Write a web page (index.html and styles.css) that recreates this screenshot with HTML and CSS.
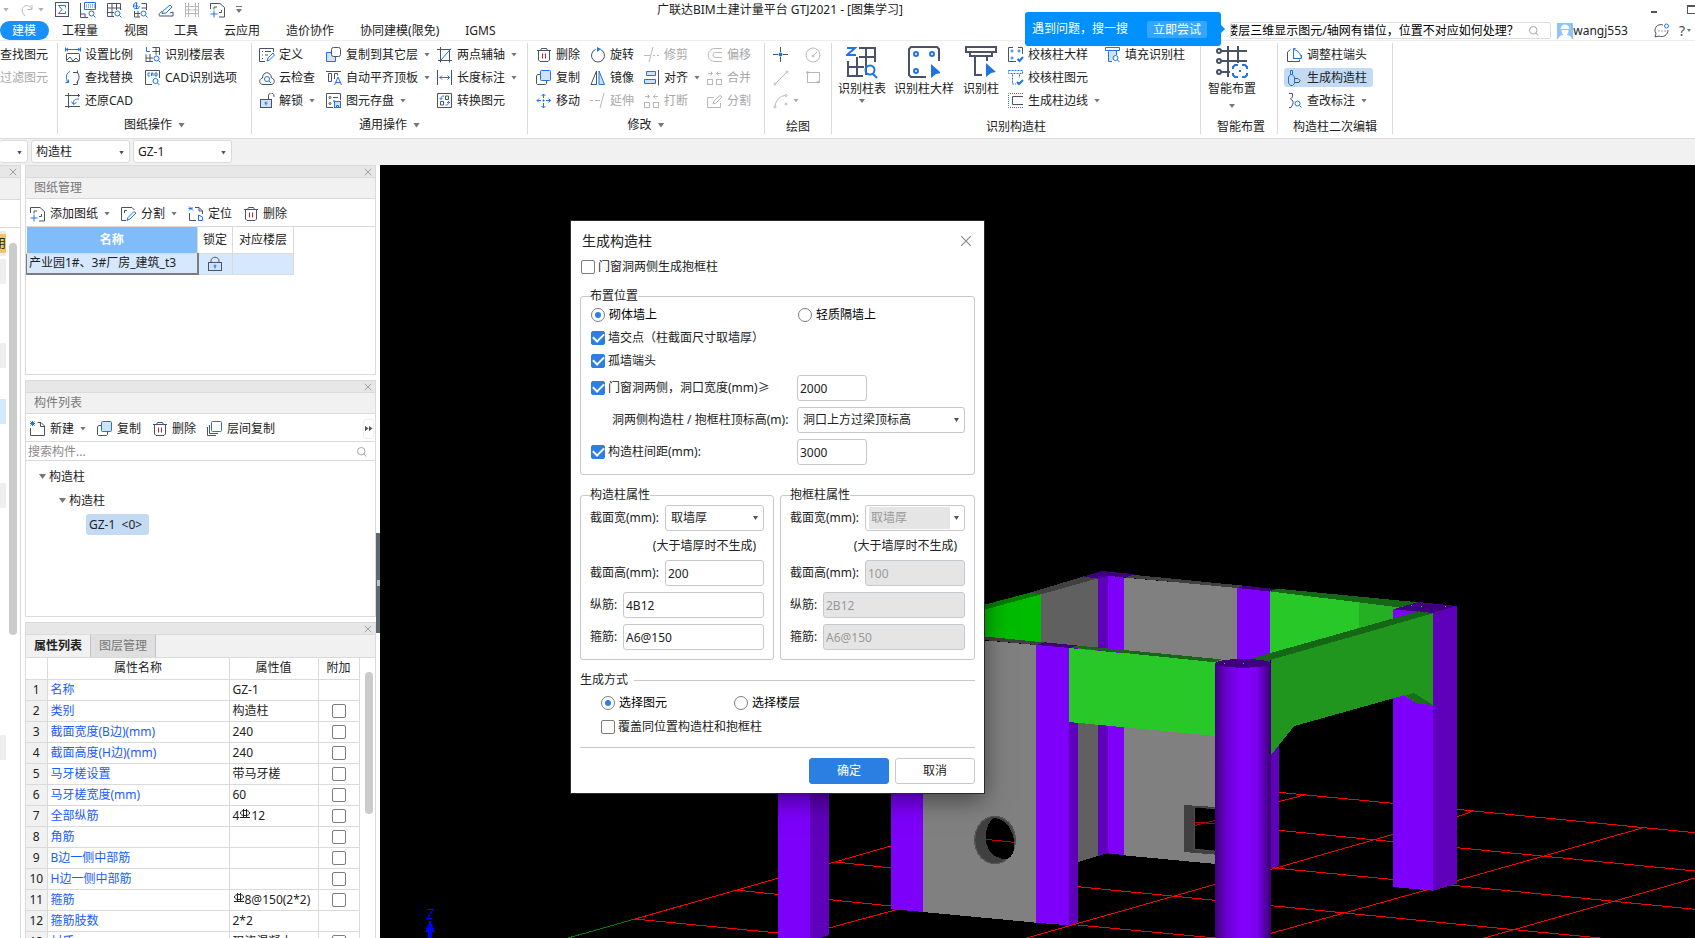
FILE: index.html
```html
<!DOCTYPE html>
<html lang="zh-CN">
<head>
    <meta charset="UTF-8">
    <meta name="viewport" content="width=device-width, initial-scale=1.0">
    <title>广联达BIM土建计量平台 GTJ2021</title>
    <link rel="stylesheet" href="styles.css">
</head>
<body>
    <!-- iconos -->
    <svg class="defs" aria-hidden="true">
        <symbol id="redo" viewBox="0 0 16 16"><path class="s" d="M13 3v4.5H8.500M13 7C11 3 6 2.5 4 5.500S4 12 6 14"/></symbol>
        <symbol id="sum" viewBox="0 0 16 16"><rect class="s" x="1.5" y=".5" width="13" height="14"/><path class="b" d="M11.500 5.500V3.500h-7L8 7.500l-3.500 4h7V9.500"/></symbol>
        <symbol id="keys" viewBox="0 0 16 16"><path class="s" d="M.5 1v14.500H8M.5 12H5v3"/><path class="b" d="M4.500 .5h11v7h-11z"/><path class="b" d="M6 3h9M6 5h9" stroke-dasharray="1 1"/><circle class="b" cx="11.500" cy="11.500" r="2.500"/><path class="b" d="M13.500 13.500l2 2"/></symbol>
        <symbol id="gridfind" viewBox="0 0 16 16"><path class="s" d="M8 14.500H1.500v-13h13V8M1.500 6h13M1.500 10.500H8M6 1.500v13M10.500 1.500V8"/><circle class="b" cx="11.500" cy="11.500" r="2.500"/><path class="b" d="M13.500 13.500l2 2"/></symbol>
        <symbol id="globefind" viewBox="0 0 16 16"><path class="b" d="M7.500 4a3 3 0 1 1-2-3M4.500 1v6M1 4h5"/><path class="s" d="M9.500 1.500h5V8M9.500 6h5M2.500 9v6H8M2.500 11.500H8M6 9v6"/><circle class="b" cx="11.500" cy="11.500" r="2.500"/><path class="b" d="M13.500 13.500l2 2"/></symbol>
        <symbol id="pen" viewBox="0 0 16 16"><path class="b" d="M5 9l7-6 2 2-6 6-4 .5z"/><path class="s" d="M4 9.500C1 11 0 14 2 14h13V10l-3 1"/></symbol>
        <symbol id="frame" viewBox="0 0 16 16"><path class="s" d="M1.500 1v14M14.500 1v14M4.500 1v14M11.500 1v14M1 4.500h14M1 11.500h14M1 8h14"/></symbol>
        <symbol id="addsheet" viewBox="0 0 16 16"><path class="s" d="M.5 7V1.500H10l4.500 4V15H9M4 7.500V5h3M9 10.500h2.500V8"/><path class="b" d="M.5 12h7M4 8.500v7"/></symbol>
        <symbol id="scale" viewBox="0 0 16 16"><path class="b" d="M1 2.500h14M.5 .5v4M15.500 .5v4M3 1L1 2.500 3 4M13 1l2 1.500L13 4"/><rect class="s" x="1.500" y="6.500" width="13" height="8" rx="1"/><path class="s" d="M2 13l3-3 3 4 3-3 3 3"/></symbol>
        <symbol id="swap" viewBox="0 0 16 16"><path class="b" d="M5 1.500C1 3 .5 8 3 13M.5 12.500h3v-3"/><path class="s" d="M8 2.500h4.500M12.500 .5v3M12 2c3 3 2.500 8-.5 11M8 14.500h4.500V10.500"/></symbol>
        <symbol id="crop" viewBox="0 0 16 16"><path class="s" d="M3.500 0v15M0 2.500h15M0 13.500h15M13.500 1v3"/><path class="b" d="M14 6c-4 0-6 1-5.500 5M6.500 8.500l2 3 3-2"/></symbol>
        <symbol id="floors" viewBox="0 0 16 16"><path class="b" d="M1.500 0v4.500H5"/><path class="s" d="M7.500 .5h7V8M7.500 4.500h7M11 .5V8M1 7.500v7h7M1 11h7M5 7v8"/><circle class="b" cx="11.500" cy="11.500" r="2.500"/><path class="b" d="M13.500 13.500l2 2"/></symbol>
        <symbol id="cad" viewBox="0 0 16 16"><path class="s" d="M14.500 8V.5h-14v14H7"/><path class="b" d="M5 3H3v3h2M6.500 6V3h1.500v3M10 3v3h2V3z"/><circle class="b" cx="10.500" cy="11" r="2.500"/><path class="b" d="M12.500 13l2 2"/></symbol>
        <symbol id="define" viewBox="0 0 16 16"><path class="s" d="M14.500 5V1.500h-14v13H6M3 4.500h1M6 4.500h6M3 8h1M6 8h3M3 11.500h1"/><path class="b" d="M8 14l1-3 5-5 1.500 2-5 5z"/></symbol>
        <symbol id="cloud" viewBox="0 0 16 16"><path class="s" d="M4 14.500C0 14.500-.5 9 3.500 8 3.500 1 12 1 12.500 8c4 1 3.500 6.500-.5 6.500z"/><circle class="b" cx="8" cy="9" r="2.500"/><path class="b" d="M10 11l2 2"/></symbol>
        <symbol id="unlock" viewBox="0 0 16 16"><rect class="s f" x="1.500" y="6.500" width="11" height="8"/><path class="s" d="M9.500 6V3c0-4 5.500-4 5.500 0v1"/><path class="b" d="M7 8.500v4M5.500 10h3"/></symbol>
        <symbol id="lock" viewBox="0 0 16 16"><rect class="s f" x="1.500" y="6.500" width="13" height="8"/><path class="s" d="M4 6.500V5c0-5 8-5 8 0v1.500"/><path class="b" d="M8 8.500v4M6.500 10h3"/></symbol>
        <symbol id="layers" viewBox="0 0 16 16"><path class="b f" d="M6 5.500H.5v9h9V10"/><rect class="s fw" x="5.500" y=".5" width="9" height="9" rx="2"/></symbol>
        <symbol id="flush" viewBox="0 0 16 16"><path class="s" d="M0 1.500h15M2.500 3.500h3v8h-3zM8.500 9V3.500h3v2"/><path class="b" d="M8.500 15l3.500-8 3.500 8M10 12.500h4"/></symbol>
        <symbol id="store" viewBox="0 0 16 16"><path class="s" d="M7 14.500H.5V.5h14V7M7 4.500h5M7 8h2"/><circle class="s" cx="4" cy="4.500" r="1"/><circle class="s" cx="4" cy="10.500" r="1"/><rect class="b f" x="8.500" y="8.500" width="6" height="6"/><path class="b" d="M10.500 15v-2.500h2V15"/></symbol>
        <symbol id="axis" viewBox="0 0 16 16"><path class="s" d="M3.500 0v15.500M12.500 2.500v13M0 2.500h14M1 13.500h14"/><path class="b" d="M3.500 13.500L14 1.500"/></symbol>
        <symbol id="dim" viewBox="0 0 16 16"><path class="s" d="M.5 0v15M14.500 0v15"/><path class="b" d="M2.500 7.500h10M5 5.500l-2 2 2 2M10.500 5.500l2 2-2 2"/></symbol>
        <symbol id="convert" viewBox="0 0 16 16"><path class="s" d="M.5 .5h14v14H.5zM8.500 3h3v3.500h-3zM3.500 8.500h3V12h-3z"/><path class="b" d="M7 3C4 3 4 4 4 6.500M2.500 5L4 6.500 5.500 5M8.500 12c3 0 3-1 3-3.500M10 10l1.500-1.500L13 10"/></symbol>
        <symbol id="trash" viewBox="0 0 16 16"><path class="s" d="M1 3.500h14M4.500 3.500l1-2h5l1 2M2.500 3.500v9.500l1.500 1.500h8l1.500-1.500V3.500"/><path class="r" d="M6.500 6.500v5M9.500 6.500v5"/></symbol>
        <symbol id="copy" viewBox="0 0 16 16"><path class="s" d="M5 4.500H1.500L.5 6v7.500l1 1h8l1-1V11"/><rect class="b f" x="4.500" y=".5" width="10" height="10" rx="1"/></symbol>
        <symbol id="move" viewBox="0 0 16 16"><path class="b" d="M7.500 1v4M7.500 10v5M1 7.500h4M10 7.500h5M5.500 3l2-2 2 2M5.500 13l2 2 2-2M3 5.500l-2 2 2 2M12.500 5.500l2 2-2 2"/><path class="s" d="M7.500 6.500v2M6.500 7.500h2"/></symbol>
        <symbol id="rotate" viewBox="0 0 16 16"><path class="s" d="M5.500 2.500a6.500 6.500 0 1 0 5 0"/><path class="fb" d="M7 0l4 2-4 3z"/></symbol>
        <symbol id="mirror" viewBox="0 0 16 16"><path class="s" d="M6.500 1v13.500H1z"/><path class="b f" d="M9 1v13.500h5.500z"/></symbol>
        <symbol id="trim" viewBox="0 0 16 16"><path class="s" d="M0 8.500h6M9 0L5 15M9 8.500h2M13 8.500h2"/></symbol>
        <symbol id="extend" viewBox="0 0 16 16"><path class="s" d="M0 7.500h3M5 7.500h5M14 0l-4 15"/></symbol>
        <symbol id="align" viewBox="0 0 16 16"><path class="s" d="M14.500 0v15.500"/><path class="b f" d="M2.500 1.500h9v4h-9zM.5 9.500h11v4H.5z"/></symbol>
        <symbol id="offset" viewBox="0 0 16 16"><path class="s" d="M15 1.500H8c-9 0-9 13 0 13h7M15 5.500H9c-4 0-4 5 0 5h6"/></symbol>
        <symbol id="merge" viewBox="0 0 16 16"><rect class="s" x=".5" y="9.500" width="5" height="5"/><rect class="s" x="9.500" y="9.500" width="5" height="5"/><path class="s" d="M1 3.500h4M3.500 1.500l2 2-2 2M14 3.500h-4M11.500 1.500l-2 2 2 2"/></symbol>
        <symbol id="split" viewBox="0 0 16 16"><path class="s" d="M7 4.500H.5v10h13V10M6 11l3-1 6-6-2-1.500L7 8z"/></symbol>
        <symbol id="point" viewBox="0 0 16 16"><path class="s" d="M7.500 0v5M7.500 10v5M0 7.500h5M10 7.500h5"/><circle class="fb" cx="7.500" cy="7.500" r="2"/></symbol>
        <symbol id="line" viewBox="0 0 16 16"><path class="s" d="M3 13L13 3"/><circle class="s" cx="2" cy="14" r="1"/><circle class="s" cx="14" cy="2" r="1"/></symbol>
        <symbol id="arc" viewBox="0 0 16 16"><path class="s" d="M2 13C3 7 7 3 12 2.500"/><circle class="s" cx="2" cy="14" r="1"/><circle class="s" cx="13" cy="2.500" r="1"/><circle class="s" cx="13" cy="11" r="1"/></symbol>
        <symbol id="circle" viewBox="0 0 16 16"><circle class="s" cx="8" cy="8" r="7"/><circle class="s" cx="8" cy="9" r="1"/><path class="s" d="M9 8l3-3"/></symbol>
        <symbol id="rect" viewBox="0 0 16 16"><rect class="s" x="2.500" y="2.500" width="12" height="10"/><circle class="s" cx="2.500" cy="2.500" r="1"/><circle class="s" cx="13" cy="12" r="1"/></symbol>
        <symbol id="colcheck" viewBox="0 0 16 16"><path class="s" d="M5 .5H.5v14H8M10 .5h4.500V7"/><circle class="b" cx="4" cy="4" r="1"/><circle class="b" cx="11" cy="4" r="1"/><circle class="b" cx="4" cy="11" r="1"/><path class="b w2" d="M9.500 12l2 2 3.500-4"/></symbol>
        <symbol id="elcheck" viewBox="0 0 16 16"><path class="b" d="M.5 .5h14v3H.500zM4.500 4.500V14H8M11.500 4.500V8" stroke-dasharray="2 1"/><path class="b w2" d="M9 12l2 2 4-4"/></symbol>
        <symbol id="edge" viewBox="0 0 16 16"><path class="b" d="M15 .5H.5v14H15" stroke-dasharray="1 1"/><path class="s" d="M15 3.500H4.500v8H15"/></symbol>
        <symbol id="fillcol" viewBox="0 0 16 16"><path class="fl" d="M3 4h8v4l-4 6H3z"/><path class="b" d="M.5 .5h14v3H.5zM3.500 4.500v10H7M11.500 4v4"/><circle class="b" cx="10.500" cy="11" r="2.500"/><path class="b" d="M12.500 13l2 2"/></symbol>
        <symbol id="colend" viewBox="0 0 16 16"><path class="s" d="M3.500 2.500L.5 5v9.500h12v-2M6.500 4v8"/><path class="b" d="M6.500 1.500v10h8c-1-5-3-8-8-9M6.500 1.500h2M14.500 11V8"/></symbol>
        <symbol id="gencol" viewBox="0 0 16 16"><path class="b" d="M3.500 .5h2v4h-2zM3.500 4.500L1.500 7v6l2 2.500h2l2-2V7l-2-2.500"/><path class="s" d="M8 8.500h3l2 2-1 2H8"/></symbol>
        <symbol id="editdim" viewBox="0 0 16 16"><path class="s" d="M2 .5h3.500V4L3.500 6 6 8v3l-2 3.500H2"/><circle class="b" cx="10.500" cy="10.500" r="2.500"/><path class="b" d="M12.500 12.500l2 2"/></symbol>
        <symbol id="cutsheet" viewBox="0 0 16 16"><path class="s" d="M5 14.500H.5v-13H11L13.500 4M3.500 7V4.500H6"/><path class="b" d="M6 14.500l1-3 6-6L15 7l-6 6z"/></symbol>
        <symbol id="locate" viewBox="0 0 16 16"><path class="b" d="M1 .5l4 4M4.500 1L1 4.500M.5 2.500h4"/><path class="s" d="M1.500 7v7.500H8M7 1.500h4l3.500 3.500v3M11 1.500V5h3"/><path class="b" d="M10.500 9v5.500h4V11l-4-2"/></symbol>
        <symbol id="newdoc" viewBox="0 0 16 16"><path class="s" d="M.5 7v7.500h14V5L11 1.500H7.500M10.500 1.500v4h4"/><path class="b" d="M.5 .5l4 4M4.500 .5l-4 4M2.500 0v5M0 2.500h5"/></symbol>
        <symbol id="floorcopy" viewBox="0 0 16 16"><path class="s" d="M.5 6v8.500H9M2.500 4v8.500H11"/><rect class="b fw" x="4.500" y=".5" width="10" height="10" rx="1"/></symbol>
        <symbol id="find" viewBox="0 0 16 16"><circle class="g" cx="7" cy="7" r="5"/><path class="g" d="M10.500 10.500l3 3.500"/></symbol>
        <symbol id="chat" viewBox="0 0 16 16"><path class="s" d="M9 2C3 0-1 6 2 10.500L1 14l4-1c4 2 9-1 9-6M4.500 8h1M7.500 8h1M10.500 8h1"/><circle class="b" cx="12.500" cy="3" r="2"/></symbol>
        <symbol id="close" viewBox="0 0 10 10"><path class="g" d="M1 1l8 8M9 1L1 9"/></symbol>
        <symbol id="rebar" viewBox="0 0 10 10"><path class="k" d="M3.500 0v8M6.500 0v8M0 8.500h10"/><ellipse class="k" cx="5" cy="4" rx="4.500" ry="2.500"/></symbol>
        <symbol id="bigtable" viewBox="0 0 32 32"><path class="b w3" d="M1 2h8L1 9h9"/><path class="s w3" d="M13 2h16v14M13 11h16M20 2v27M2 15v15h15M2 21h16M11 11v19"/><circle class="b w3" cx="24" cy="24" r="4.500"/><path class="b w3" d="M27 28l4 4"/></symbol>
        <symbol id="bigdetail" viewBox="0 0 32 32"><path class="s w3" d="M31 15V3l-2-2H3L1 3v26l2 2h15"/><circle class="b w3" cx="8" cy="8" r="2"/><circle class="b w3" cx="24" cy="8" r="2"/><circle class="b w3" cx="8" cy="25" r="2"/><path class="fb" d="M23 18l10 9-5 1-5 4z"/></symbol>
        <symbol id="bigcol" viewBox="0 0 32 32"><path class="s w3" d="M1 1h30v5h-4v4H5V6H1zM5 6h22M10 11v18h7M22 10v5"/><path class="fb" d="M21 17l10 9-5 1-5 4z"/></symbol>
        <symbol id="biglayout" viewBox="0 0 32 32"><path class="s w3" d="M5 5h26M5 15h26M5 26h9M12 0v31M22 0v17"/><circle class="s w3 fw" cx="3" cy="5" r="2"/><circle class="s w3 fw" cx="3" cy="15" r="2"/><circle class="s w3 fw" cx="3" cy="26" r="2"/><path class="cut" d="M16 18h16v14H16z"/><path class="b w3" d="M22 19h-3l-2 2v2M26 19h3l2 2v2M17 27v2l2 2h3M31 27v2l-2 2h-3M24 24v2"/></symbol>
    </svg>

    <header class="titlebar">
        <div class="quick">
            <i class="caret dim"></i>
            <svg class="icon off"><use href="#redo"/></svg><i class="caret dim"></i>
            <svg class="icon"><use href="#sum"/></svg>
            <svg class="icon"><use href="#keys"/></svg>
            <svg class="icon"><use href="#gridfind"/></svg>
            <svg class="icon"><use href="#globefind"/></svg>
            <svg class="icon"><use href="#pen"/></svg>
            <svg class="icon off"><use href="#frame"/></svg>
            <svg class="icon"><use href="#addsheet"/></svg>
            <i class="caret more"></i>
        </div>
        <h1>广联达BIM土建计量平台 GTJ2021 - [图集学习]</h1>
        <div class="winbtns">
            <button class="min" aria-label="最小化"></button>
            <button class="restore" aria-label="还原"></button>
        </div>
    </header>

    <nav class="menu">
        <a class="on" href="#">建模</a>
        <a href="#">工程量</a>
        <a href="#">视图</a>
        <a href="#">工具</a>
        <a href="#">云应用</a>
        <a href="#">造价协作</a>
        <a href="#">协同建模(限免)</a>
        <a href="#">IGMS</a>
        <div class="account">
            <label class="ask">
                <input type="text" aria-label="搜索问题" value="楼层三维显示图元/轴网有错位，位置不对应如何处理？">
                <svg class="icon"><use href="#find"/></svg>
            </label>
            <svg class="avatar" viewBox="0 0 16 16"><rect width="16" height="16" fill="#8fc3fb"/><path fill="#fff" d="M3.500 6C4 0 12 0 12.500 6l-1 1c0 3-1 4-2 5 3 0 5 2 5.500 4H1c.5-2 2.500-4 5.500-4-1-1-2-2-2-5z"/><path stroke="#8fc3fb" d="M3 6.500h10"/></svg>
            <span>wangj553</span>
            <svg class="icon chat"><use href="#chat"/></svg>
            <button class="help">?<i class="caret"></i></button>
        </div>
        <div class="tip">遇到问题，搜一搜 <button>立即尝试</button></div>
    </nav>

    <section class="ribbon">
        <div class="group g1">
            <div class="cols"><div class="col">
                <button>查找图元</button>
                <button class="off" disabled>过滤图元</button>
            </div></div>
        </div>
        <div class="group g2">
            <div class="cols">
                <div class="col">
                    <button><svg class="icon"><use href="#scale"/></svg>设置比例</button>
                    <button><svg class="icon"><use href="#swap"/></svg>查找替换</button>
                    <button><svg class="icon"><use href="#crop"/></svg>还原CAD</button>
                </div>
                <div class="col">
                    <button><svg class="icon"><use href="#floors"/></svg>识别楼层表</button>
                    <button><svg class="icon"><use href="#cad"/></svg>CAD识别选项</button>
                </div>
            </div>
            <div class="name">图纸操作<i class="caret big"></i></div>
        </div>
        <div class="group g3">
            <div class="cols">
                <div class="col">
                    <button><svg class="icon"><use href="#define"/></svg>定义</button>
                    <button><svg class="icon"><use href="#cloud"/></svg>云检查</button>
                    <button><svg class="icon"><use href="#unlock"/></svg>解锁<i class="caret"></i></button>
                </div>
                <div class="col">
                    <button><svg class="icon"><use href="#layers"/></svg>复制到其它层<i class="caret"></i></button>
                    <button><svg class="icon"><use href="#flush"/></svg>自动平齐顶板<i class="caret"></i></button>
                    <button><svg class="icon"><use href="#store"/></svg>图元存盘<i class="caret"></i></button>
                </div>
                <div class="col">
                    <button><svg class="icon"><use href="#axis"/></svg>两点辅轴<i class="caret"></i></button>
                    <button><svg class="icon"><use href="#dim"/></svg>长度标注<i class="caret"></i></button>
                    <button><svg class="icon"><use href="#convert"/></svg>转换图元</button>
                </div>
            </div>
            <div class="name">通用操作<i class="caret big"></i></div>
        </div>
        <div class="group g4">
            <div class="cols">
                <div class="col">
                    <button><svg class="icon"><use href="#trash"/></svg>删除</button>
                    <button><svg class="icon"><use href="#copy"/></svg>复制</button>
                    <button><svg class="icon"><use href="#move"/></svg>移动</button>
                </div>
                <div class="col">
                    <button><svg class="icon"><use href="#rotate"/></svg>旋转</button>
                    <button><svg class="icon"><use href="#mirror"/></svg>镜像</button>
                    <button class="off" disabled><svg class="icon"><use href="#extend"/></svg>延伸</button>
                </div>
                <div class="col">
                    <button class="off" disabled><svg class="icon"><use href="#trim"/></svg>修剪</button>
                    <button><svg class="icon"><use href="#align"/></svg>对齐<i class="caret"></i></button>
                    <button class="off" disabled><svg class="icon"><use href="#merge"/></svg>打断</button>
                </div>
                <div class="col">
                    <button class="off" disabled><svg class="icon"><use href="#offset"/></svg>偏移</button>
                    <button class="off" disabled><svg class="icon"><use href="#merge"/></svg>合并</button>
                    <button class="off" disabled><svg class="icon"><use href="#split"/></svg>分割</button>
                </div>
            </div>
            <div class="name">修改<i class="caret big"></i></div>
        </div>
        <div class="group g5">
            <div class="cols">
                <div class="col">
                    <button aria-label="点"><svg class="icon"><use href="#point"/></svg></button>
                    <button class="off" disabled aria-label="直线"><svg class="icon"><use href="#line"/></svg></button>
                    <button class="off" disabled aria-label="弧线"><svg class="icon"><use href="#arc"/></svg><i class="caret near"></i></button>
                </div>
                <div class="col">
                    <button class="off" disabled aria-label="圆"><svg class="icon"><use href="#circle"/></svg></button>
                    <button class="off" disabled aria-label="矩形"><svg class="icon"><use href="#rect"/></svg></button>
                </div>
            </div>
            <div class="name low">绘图</div>
        </div>
        <div class="group g6">
            <div class="cols">
                <button class="big"><svg><use href="#bigtable"/></svg>识别柱表<i class="caret"></i></button>
                <button class="big"><svg><use href="#bigdetail"/></svg>识别柱大样</button>
                <button class="big"><svg><use href="#bigcol"/></svg>识别柱</button>
                <div class="col">
                    <button><svg class="icon"><use href="#colcheck"/></svg>校核柱大样</button>
                    <button><svg class="icon"><use href="#elcheck"/></svg>校核柱图元</button>
                    <button><svg class="icon"><use href="#edge"/></svg>生成柱边线<i class="caret"></i></button>
                </div>
                <div class="col">
                    <button><svg class="icon"><use href="#fillcol"/></svg>填充识别柱</button>
                </div>
            </div>
            <div class="name low">识别构造柱</div>
        </div>
        <div class="group g7">
            <div class="cols">
                <button class="big"><svg><use href="#biglayout"/></svg>智能布置<i class="caret"></i></button>
            </div>
            <div class="name low">智能布置</div>
        </div>
        <div class="group g8">
            <div class="cols">
                <div class="col">
                    <button><svg class="icon"><use href="#colend"/></svg>调整柱端头</button>
                    <button class="active"><svg class="icon"><use href="#gencol"/></svg>生成构造柱</button>
                    <button><svg class="icon"><use href="#editdim"/></svg>查改标注<i class="caret"></i></button>
                </div>
            </div>
            <div class="name low">构造柱二次编辑</div>
        </div>
    </section>

    <div class="combos">
        <span class="select short"><select aria-label="楼层"><option></option></select></span>
        <span class="select"><select aria-label="构件类型"><option>构造柱</option></select></span>
        <span class="select"><select aria-label="构件"><option>GZ-1</option></select></span>
    </div>

    <main>
        <aside class="strip">
            <div class="grip"><button aria-label="关闭"><svg><use href="#close"/></svg></button></div>
            <div class="head"></div>
            <div class="bar"></div>
            <div class="body">
                <div class="tags">
                    <span class="tag gold"><b>用</b></span>
                    <span class="tag"></span>
                    <span class="tag skip"></span>
                    <span class="tag skip sel"></span>
                    <span class="tag skip"></span>
                    <span class="tag last"></span>
                </div>
                <div class="thumb"></div>
            </div>
        </aside>

        <div class="panels">
            <section class="panel sheets">
                <div class="grip"><button aria-label="关闭"><svg><use href="#close"/></svg></button></div>
                <h2>图纸管理</h2>
                <div class="tools">
                    <button><svg class="icon"><use href="#addsheet"/></svg>添加图纸<i class="caret"></i></button>
                    <button><svg class="icon"><use href="#cutsheet"/></svg>分割<i class="caret"></i></button>
                    <button><svg class="icon"><use href="#locate"/></svg>定位</button>
                    <button><svg class="icon"><use href="#trash"/></svg>删除</button>
                </div>
                <table class="files">
                    <thead><tr><th class="c1">名称</th><th class="c2">锁定</th><th class="c3">对应楼层</th></tr></thead>
                    <tbody><tr><td class="cur">产业园1#、3#厂房_建筑_t3</td><td><svg class="icon"><use href="#lock"/></svg></td><td></td></tr></tbody>
                </table>
            </section>

            <section class="panel parts">
                <div class="grip"><button aria-label="关闭"><svg><use href="#close"/></svg></button></div>
                <h2>构件列表</h2>
                <div class="tools">
                    <button><svg class="icon"><use href="#newdoc"/></svg>新建<i class="caret"></i></button>
                    <button><svg class="icon"><use href="#copy"/></svg>复制</button>
                    <button><svg class="icon"><use href="#trash"/></svg>删除</button>
                    <button><svg class="icon"><use href="#floorcopy"/></svg>层间复制</button>
                    <button class="overflow" aria-label="更多"><i></i><i></i></button>
                </div>
                <label class="search">
                    <input type="text" placeholder="搜索构件..." aria-label="搜索构件">
                    <svg class="icon"><use href="#find"/></svg>
                </label>
                <ul class="tree">
                    <li><i class="caret big"></i>构造柱
                        <ul>
                            <li><i class="caret big"></i>构造柱
                                <ul><li class="leaf"><span>GZ-1&nbsp; &lt;0&gt;</span></li></ul>
                            </li>
                        </ul>
                    </li>
                </ul>
            </section>

            <section class="panel props">
                <div class="grip"><button aria-label="关闭"><svg><use href="#close"/></svg></button></div>
                <div class="tabs">
                    <button class="on">属性列表</button>
                    <button>图层管理</button>
                </div>
                <div class="scroll">
                    <table>
                        <thead><tr><th class="n"></th><th class="p">属性名称</th><th class="v">属性值</th><th class="x">附加</th></tr></thead>
                        <tbody>
                            <tr><th>1</th><td>名称</td><td>GZ-1</td><td></td></tr>
                            <tr><th>2</th><td>类别</td><td>构造柱</td><td><input type="checkbox" aria-label="附加 类别"></td></tr>
                            <tr><th>3</th><td>截面宽度(B边)(mm)</td><td>240</td><td><input type="checkbox" aria-label="附加 截面宽度"></td></tr>
                            <tr><th>4</th><td>截面高度(H边)(mm)</td><td>240</td><td><input type="checkbox" aria-label="附加 截面高度"></td></tr>
                            <tr><th>5</th><td>马牙槎设置</td><td>带马牙槎</td><td><input type="checkbox" aria-label="附加 马牙槎设置"></td></tr>
                            <tr><th>6</th><td>马牙槎宽度(mm)</td><td>60</td><td><input type="checkbox" aria-label="附加 马牙槎宽度"></td></tr>
                            <tr><th>7</th><td>全部纵筋</td><td>4<svg class="rebar"><use href="#rebar"/></svg>12</td><td><input type="checkbox" aria-label="附加 全部纵筋"></td></tr>
                            <tr><th>8</th><td>角筋</td><td></td><td><input type="checkbox" aria-label="附加 角筋"></td></tr>
                            <tr><th>9</th><td>B边一侧中部筋</td><td></td><td><input type="checkbox" aria-label="附加 B边一侧中部筋"></td></tr>
                            <tr><th>10</th><td>H边一侧中部筋</td><td></td><td><input type="checkbox" aria-label="附加 H边一侧中部筋"></td></tr>
                            <tr><th>11</th><td>箍筋</td><td><svg class="rebar"><use href="#rebar"/></svg>8@150(2*2)</td><td><input type="checkbox" aria-label="附加 箍筋"></td></tr>
                            <tr><th>12</th><td>箍筋肢数</td><td>2*2</td><td></td></tr>
                            <tr><th>13</th><td>材质</td><td>现浇混凝土</td><td><input type="checkbox" aria-label="附加 材质"></td></tr>
                        </tbody>
                    </table>
                    <div class="thumb"></div>
                </div>
            </section>
        </div>

        <div class="splitter"><button aria-label="收起"></button></div>

        <div class="view">
            <svg class="scene" viewBox="380 165 1315 773" preserveAspectRatio="xMinYMin slice">
                <defs>
                    <linearGradient id="cyl">
                        <stop offset="0" stop-color="#41007f"/><stop offset=".2" stop-color="#6a00d0"/>
                        <stop offset=".5" stop-color="#8600ff"/><stop offset=".75" stop-color="#7a00ee"/>
                        <stop offset="1" stop-color="#39006f"/>
                    </linearGradient>
                </defs>
                <!-- red de ejes -->
                <g class="axes">
                    <path d="M635 919L891 846M635 919l143 14M735 890l156 16M836 862l55 6M829 928l70-19"/>
                    <path class="green" d="M568 938l67-19"/>
                </g>
                <g transform="translate(970 550) scale(.33333)">
                    <path class="axes thick" d="M323 1010L736 1051M736 1003L170 1164M323 1125L736 1164M903 1150L1370 1020L1461 993M903 1067L1530 1129L1890 1164M903 953L1461 1007L2175 1078M903 958L1269 853M1461 992L2020 833M927 841L1269 875M1461 893L2175 963M927 727L1269 760M1461 778L2175 848M927 755L1010 733M1461 800L1510 783M1543 1164L1935 1053L2175 984"/>
                    <!-- fondo -->
                    <path fill="#606060" d="M213 133L384 85V918L213 970z"/>
                    <path fill="#404040" d="M180 128L345 78L384 85L213 133z"/>
                    <path fill="#00bb00" d="M-10 194L213 133V278L-10 260z"/>
                    <path fill="#007d00" d="M-10 178L180 128L213 133L-10 194z"/>
                    <path fill="#808080" d="M462 83L801 113V948L462 916z"/>
                    <path fill="#404040" d="M465 72L830 108L801 114L462 82z"/>
                    <path fill="#5f00bb" d="M384 85L413 77V910L384 918z"/>
                    <path fill="#7d00fa" d="M413 77L462 83V915L413 910z"/>
                    <path fill="#3f007f" d="M340 80L396 63L494 73L465 82L413 77L384 86z"/>
                    <path fill="#404040" d="M642 765l96 6v143l-96-8z"/>
                    <path fill="#000" stroke="#555" stroke-width="2" d="M675 771l65 6v127l-65-7z"/>
                    <path stroke="#b00000" stroke-width="3" d="M675 816l64 6M675 827l64-17"/>
                    <path fill="#7d00fa" d="M801 114L900 123V340H801z"/>
                    <path fill="#3f007f" d="M801 114L824 107L922 118L900 125z"/>
                    <path fill="#5f00bb" d="M890 560H927V948L890 958z"/>
                    <path fill="#28c828" d="M900 124L1167 150V260L900 330z"/>
                    <path fill="#25b023" d="M1167 150L1300 165V230L1167 260z"/>
                    <path fill="#156615" d="M922 116L1345 157L1285 172L900 124z"/>
                    <!-- columna derecha -->
                    <path fill="#7d00fa" d="M1269 178L1389 188V1022L1269 1011z"/>
                    <path fill="#5f00bb" d="M1389 188L1461 168V1001L1389 1022z"/>
                    <path fill="#3f007f" d="M1269 178L1345 156L1461 168L1389 189z"/>
                    <path fill="#20961e" d="M1389 188V465L1340 460L1302 436L973 528L903 615V325z"/>
                    <path fill="#156615" d="M1345 184L1389 190L890 333L845 325z"/>
                    <path fill="#176f17" d="M1306 436L1333 429L1389 465L1340 460z"/>
                    <!-- muro frontal -->
                    <path fill="#808080" d="M-141 255L198 285V1118L-141 1086z"/>
                    <path fill="#404040" d="M-10 254L230 278L198 285L-10 265z"/>
                    <ellipse cx="75" cy="870" rx="61" ry="71" fill="#404040" stroke="#555" stroke-width="4"/>
                    <path fill="#000" d="M72 804C110 804 135 850 133 888S110 930 96 927C60 918 47 890 47 860S60 812 72 804z"/>
                    <path stroke="#c00000" stroke-width="3" d="M48 868l84 9"/>
                    <path fill="#5f00bb" d="M297 293L323 290V1118L297 1126z"/>
                    <path fill="#7d00fa" d="M198 285L297 293V1126L198 1118z"/>
                    <path fill="#3f007f" d="M198 285L225 277L325 287L297 294z"/>
                    <path fill="#28c828" d="M297 294L736 336V558L297 516z"/>
                    <path fill="#156615" d="M300 292L325 287L755 328L736 337z"/>
                    <path fill="url(#cyl)" d="M736 340H903V1164H736z"/>
                    <ellipse cx="819" cy="340" rx="83" ry="13" fill="#3f007f"/>
                    <path fill="#4fc04f" d="M762 339h3v3h-3zM819 339h3v3h-3zM1323 165h3v3h-3zM1353 168h3v3h-3zM1425 168h3v3h-3z"/>
                </g>
                <!-- columnas izquierdas -->
                <path fill="#7d00fa" d="M778 700h32v238h-32zM891 700h32v212l-32-3z"/>
                <path fill="#5f00bb" d="M810 700h19v235l-8 3h-11z"/>
                <path stroke="#0000ff" fill="none" d="M427 909.500h6l-6 9h6"/>
                <path fill="#0000ff" d="M430 920l5 12h-3v6h-4v-6h-3z"/>
            </svg>

            <form class="dialog">
                <header><h2>生成构造柱</h2><button type="button" aria-label="关闭"><svg><use href="#close"/></svg></button></header>
                <label class="pair"><input type="checkbox">门窗洞两侧生成抱框柱</label>
                <fieldset class="place">
                    <legend>布置位置</legend>
                    <div class="row two">
                        <label class="pair strong"><input type="radio" name="wall" checked>砌体墙上</label>
                        <label class="pair strong"><input type="radio" name="wall">轻质隔墙上</label>
                    </div>
                    <div class="row"><label class="pair"><input type="checkbox" checked>墙交点（柱截面尺寸取墙厚）</label></div>
                    <div class="row"><label class="pair"><input type="checkbox" checked>孤墙端头</label></div>
                    <div class="field">
                        <label class="pair"><input type="checkbox" checked>门窗洞两侧，洞口宽度(mm)≥</label>
                        <input class="num" type="text" aria-label="洞口宽度" value="2000">
                    </div>
                    <div class="field">
                        <label class="right" for="toph">洞两侧构造柱 / 抱框柱顶标高(m):</label>
                        <span class="select"><select id="toph"><option>洞口上方过梁顶标高</option></select></span>
                    </div>
                    <div class="field">
                        <label class="pair"><input type="checkbox" checked>构造柱间距(mm):</label>
                        <input class="num" type="text" aria-label="构造柱间距" value="3000">
                    </div>
                </fieldset>
                <div class="halves">
                    <fieldset>
                        <legend>构造柱属性</legend>
                        <div class="field"><label for="w1">截面宽(mm):</label><span class="select"><select id="w1"><option>取墙厚</option></select></span></div>
                        <p>(大于墙厚时不生成)</p>
                        <div class="field"><label for="h1">截面高(mm):</label><input id="h1" type="text" value="200"></div>
                        <div class="field bars"><label for="z1">纵筋:</label><input id="z1" type="text" value="4B12"></div>
                        <div class="field bars"><label for="g1">箍筋:</label><input id="g1" type="text" value="A6@150"></div>
                    </fieldset>
                    <fieldset>
                        <legend>抱框柱属性</legend>
                        <div class="field"><label for="w2">截面宽(mm):</label><span class="select"><select id="w2" disabled><option>取墙厚</option></select></span></div>
                        <p>(大于墙厚时不生成)</p>
                        <div class="field"><label for="h2">截面高(mm):</label><input id="h2" type="text" value="100" disabled></div>
                        <div class="field bars"><label for="z2">纵筋:</label><input id="z2" type="text" value="2B12" disabled></div>
                        <div class="field bars"><label for="g2">箍筋:</label><input id="g2" type="text" value="A6@150" disabled></div>
                    </fieldset>
                </div>
                <h3>生成方式</h3>
                <div class="mode">
                    <div class="row two">
                        <label class="pair strong"><input type="radio" name="mode" checked>选择图元</label>
                        <label class="pair strong"><input type="radio" name="mode">选择楼层</label>
                    </div>
                    <div class="row"><label class="pair"><input type="checkbox">覆盖同位置构造柱和抱框柱</label></div>
                </div>
                <footer>
                    <button type="button" class="ok">确定</button>
                    <button type="button">取消</button>
                </footer>
            </form>
        </div>
    </main>
</body>
</html>
```

FILE: styles.css
```css
:root{
    --ink: #4a5268;
    --accent: #1e74e6;
    --soft: #cfe2fa;
    --line: #dadada;
}
*{
    box-sizing: border-box;
}
body{
    margin: 0;
    height: 100vh;
    display: flex;
    flex-direction: column;
    overflow: hidden;
    background: #fff;
    color: #222;
    font-family: "Noto Sans", "Noto Sans CJK SC", sans-serif;
    font-size: 12px;
    line-height: 16px;
}
button, input, select{
    font: inherit;
    color: inherit;
    margin: 0;
}
button{
    border: 0;
    padding: 0;
    background: none;
    white-space: nowrap;
}
h1, h2, h3, p, ul{
    margin: 0;
    padding: 0;
    font-size: 12px;
    font-weight: normal;
    list-style: none;
}

/* iconos */
.defs{
    display: none;
}
.icon{
    width: 16px;
    height: 16px;
    flex: none;
}
.s, .b, .r, .g, .k{
    fill: none;
    stroke: var(--ink);
}
.b{
    stroke: var(--accent);
}
.r{
    stroke: #d8202a;
}
.g{
    stroke: #8a8a8a;
}
.k{
    stroke: #222;
}
.f{
    fill: var(--soft);
}
.fw, .cut{
    fill: #fff;
}
.fl{
    fill: var(--soft);
}
.fb{
    fill: var(--accent);
}
.w2{
    stroke-width: 2;
}
.w3{
    stroke-width: 2;
}
.off{
    --ink: #b8b8b8;
    --accent: #b8b8b8;
    color: #a8a8a8;
}
.caret{
    flex: none;
    width: 6px;
    height: 4px;
    margin-left: 6px;
    background: #777;
    clip-path: polygon(0 0, 100% 0, 50% 100%);
}
.caret.big{
    width: 7px;
    height: 5px;
}
.dim, .off .caret{
    background: #b0b0b0;
}

/* barra de título */
.titlebar{
    display: flex;
    align-items: center;
    flex: none;
    height: 19px;
}
.quick{
    display: flex;
    align-items: center;
    gap: 10px;
    width: 243px;
    padding-left: 3px;
    flex: none;
}
.quick .caret{
    margin-left: 0;
}
.quick .off + .caret{
    margin-left: -7px;
}
.quick .more{
    height: 7px;
    clip-path: polygon(0 0, 100% 0, 100% 1px, 0 1px, 0 3px, 100% 3px, 50% 100%, 0 3px);
}
.titlebar h1{
    margin-left: 414px;
    white-space: nowrap;
}
.winbtns{
    display: flex;
    gap: 30px;
    margin-left: auto;
}
.min{
    width: 6px;
    height: 2px;
    margin-top: 6px;
    background: #555;
}
.restore{
    width: 8px;
    height: 9px;
    border: 1px solid #555;
    border-top-width: 2px;
    border-right: 0;
}

/* menú */
.menu{
    position: relative;
    display: flex;
    align-items: center;
    flex: none;
    height: 22px;
    padding-top: 2px;
    border-bottom: 1px solid #ececec;
}
.menu a{
    padding: 0 13px;
    line-height: 19px;
    color: inherit;
    text-decoration: none;
    white-space: nowrap;
}
.menu .on{
    padding-left: 12px;
    border-radius: 10px;
    background: #1890ff;
    color: #fff;
}
.account{
    display: flex;
    align-items: center;
    margin-left: auto;
    padding-right: 4px;
}
.ask{
    display: flex;
    align-items: center;
    width: 321px;
    height: 17px;
    margin-right: 6px;
    padding-right: 10px;
    border: 1px solid #ddd;
    border-radius: 2px;
}
.ask input{
    flex: 1;
    min-width: 0;
    height: 15px;
    padding: 0;
    border: 0;
    outline: 0;
    background: none;
    color: #000;
    text-indent: -5px;
}
.ask .icon{
    width: 12px;
    height: 12px;
}
.avatar{
    width: 16px;
    height: 16px;
}
.chat{
    margin: 0 9px 0 26px;
}
.help{
    display: flex;
    align-items: center;
    font-size: 14px;
    color: var(--ink);
}
.help .caret{
    width: 4px;
    height: 3px;
    margin-left: 2px;
}
.tip{
    position: absolute;
    top: -7px;
    right: 474px;
    display: flex;
    align-items: center;
    gap: 19px;
    height: 34px;
    padding: 0 14px 0 7px;
    border-radius: 3px;
    background: #0090ff;
    color: #fff;
    z-index: 2;
}
.tip::after{
    content: "";
    position: absolute;
    left: 100%;
    top: 13px;
    border: 4px solid transparent;
    border-left-color: #0090ff;
}
.tip button{
    height: 17px;
    padding: 0 6px;
    border-radius: 2px;
    background: #33a6ff;
    line-height: 17px;
}

/* cinta */
.ribbon{
    display: flex;
    flex: none;
    height: 98px;
    padding: 2px 0 4px;
    border-bottom: 1px solid var(--line);
}
.group{
    display: flex;
    flex-direction: column;
    flex: none;
    border-right: 1px solid var(--line);
}
.cols{
    display: grid;
    flex: none;
    height: 69px;
}
.col{
    display: flex;
    flex-direction: column;
    align-items: flex-start;
}
.col button{
    display: flex;
    align-items: center;
    height: 23px;
}
.col .icon{
    margin-right: 4px;
}
.name{
    display: flex;
    align-items: center;
    justify-content: center;
    flex: none;
    height: 26px;
}
.name.low{
    height: 30px;
}
.g1{
    width: 58px;
    overflow: hidden;
}
.g1 .col{
    align-items: flex-end;
    padding-right: 14px;
}
.g2 .cols{
    grid-template-columns: 80px 106px;
    padding-left: 7px;
}
.g3 .cols{
    grid-template-columns: 67px 111px 90px;
    padding-left: 7px;
}
.g4 .cols{
    grid-template-columns: 54px 54px 63px 57px;
    padding-left: 8px;
}
.g5 .cols{
    grid-template-columns: 32px 26px;
    padding-left: 8px;
}
.g5 .near{
    margin-left: 0;
}
.g6 .cols{
    grid-template-columns: 56px 69px 45px 97px 95px;
    padding-left: 6px;
}
.g7 .cols{
    grid-template-columns: 48px;
    padding: 0 21px 0 7px;
}
.g7 .name{
    padding-left: 4px;
}
.g8 .cols{
    padding: 0 19px 0 6px;
}
.big{
    display: flex;
    flex-direction: column;
    align-items: center;
    padding-top: 2px;
    justify-self: start;
}
.big svg{
    width: 32px;
    height: 34px;
    margin-bottom: 2px;
}
.big .caret{
    margin: 2px 0 0;
}
.g7 .caret{
    margin-top: 7px;
}
.g8 .col button{
    padding-left: 3px;
}
.g8 .col .active{
    height: 19px;
    margin: 2px 0;
    padding-right: 6px;
    border-radius: 3px;
    background: #c3daf4;
}

/* combos */
.combos{
    display: flex;
    gap: 3px;
    flex: none;
    height: 26px;
    padding-top: 1px;
    background: #f1f1f1;
}
.select{
    position: relative;
    display: block;
    width: 99px;
}
.select::after{
    content: "";
    position: absolute;
    right: 6px;
    top: 50%;
    width: 5px;
    height: 4px;
    margin-top: -2px;
    background: var(--ink);
    clip-path: polygon(0 0, 100% 0, 50% 100%);
    pointer-events: none;
}
select{
    appearance: none;
    width: 100%;
    height: 23px;
    padding: 0 4px;
    border: 1px solid var(--line);
    border-radius: 3px;
    background: #fff;
}
.combos .short{
    width: 28px;
}
.short select{
    border-left: 0;
}

main{
    display: flex;
    flex: 1;
    min-height: 0;
}
.grip{
    display: flex;
    align-items: center;
    justify-content: flex-end;
    flex: none;
    height: 12px;
    padding-right: 3px;
    border-bottom: 1px solid var(--line);
    background: #e7e7e7;
}
.grip button{
    display: flex;
}
.grip svg{
    width: 8px;
    height: 8px;
}
.thumb{
    border-radius: 4px;
    background: #cbcbcb;
}
.strip{
    display: flex;
    flex-direction: column;
    flex: none;
    width: 21px;
    border: solid var(--line);
    border-width: 1px 1px 0 0;
}
.strip .head{
    height: 22px;
    border-bottom: 1px solid var(--line);
    background: #f1f1f1;
}
.strip .bar{
    height: 28px;
    border-bottom: 1px solid var(--line);
}
.strip .body{
    display: flex;
    gap: 3px;
}
.tags{
    display: flex;
    flex-direction: column;
    width: 6px;
    padding-top: 3px;
}
.tag{
    height: 25px;
    margin-bottom: 3px;
    background: #eee;
    overflow: hidden;
}
.gold b{
    display: flex;
    justify-content: flex-end;
    height: 19px;
    margin-top: 3px;
    background: #f0c36d;
    font-weight: normal;
    line-height: 19px;
}
.tag.skip{
    margin-top: 56px;
}
.tag.skip.sel{
    margin-top: 28px;
    background: #d5e8fe;
}
.tag.last{
    margin-top: 224px;
}
.strip .thumb{
    width: 8px;
    height: 392px;
    margin-top: 15px;
}

/* paneles */
.panels{
    display: flex;
    flex-direction: column;
    gap: 5px;
    flex: none;
    width: 351px;
    margin-left: 4px;
}
.panel{
    flex: none;
    border: 1px solid var(--line);
}
.sheets{
    height: 210px;
}
.parts{
    height: 237px;
}
.panel h2{
    height: 21px;
    padding-left: 8px;
    border-bottom: 1px solid var(--line);
    background: #f1f1f1;
    color: #777;
    line-height: 20px;
}
.tools{
    display: flex;
    align-items: center;
    gap: 11px;
    height: 28px;
    padding: 2px 1px 0 4px;
    border-bottom: 1px solid var(--line);
}
.tools button{
    display: flex;
    align-items: center;
}
.tools .icon{
    margin-right: 4px;
}
.tools .overflow{
    width: 11px;
    height: 20px;
    margin-left: auto;
    justify-content: center;
    border: 1px solid #eee;
    border-radius: 3px;
}
.overflow i{
    width: 4px;
    height: 6px;
    background: var(--ink);
    clip-path: polygon(0 0, 100% 50%, 0 100%);
}
table{
    border-collapse: collapse;
    table-layout: fixed;
}
th, td{
    padding: 0;
    border: solid var(--line);
    border-width: 0 1px 1px 0;
    font-weight: normal;
    white-space: nowrap;
    overflow: hidden;
}
.files{
    width: 267px;
}
.files .c1{
    width: 171px;
    background: #80bbfa;
    color: #fff;
    font-weight: bold;
}
.files .c2{
    width: 35px;
}
.files .c3{
    width: 61px;
}
.files th{
    height: 26px;
}
.files td{
    height: 21px;
    background: #d5e8fe;
    text-align: center;
}
.files .cur{
    padding-left: 2px;
    border: 1px solid #7d7d7d;
    border-width: 1px 2px 2px 1px;
    text-align: left;
}
.files .icon{
    display: block;
    margin: auto;
}
.search{
    display: flex;
    align-items: center;
    height: 19px;
    padding: 1px 7px 0 2px;
    border-bottom: 1px solid var(--line);
}
.search input{
    flex: 1;
    padding: 0;
    border: 0;
    outline: 0;
    background: none;
}
.search input::placeholder{
    color: #8a8a8a;
}
.search .icon{
    width: 12px;
    height: 12px;
}
.tree{
    padding: 4px 0 0 13px;
    line-height: 24px;
}
.tree ul{
    padding-left: 20px;
}
.tree .caret{
    display: inline-block;
    margin: 0 3px 2px 0;
}
.leaf span{
    display: inline-block;
    padding: 0 7px 0 3px;
    margin-left: 7px;
    border-radius: 3px;
    background: #c3daf4;
    line-height: 21px;
}
.props{
    flex: 1;
    min-height: 0;
    display: flex;
    flex-direction: column;
    overflow: hidden;
    border-bottom: 0;
}
.tabs{
    display: flex;
    flex: none;
    height: 23px;
    border-bottom: 1px solid var(--line);
    background: #f1f1f1;
}
.tabs button{
    padding: 0 8px;
    border-right: 1px solid #c0c0c8;
    background: #dfdfdf;
    color: #777;
}
.tabs .on{
    background: #f1f1f1;
    color: #222;
    font-weight: bold;
}
.scroll{
    display: flex;
    gap: 5px;
    min-height: 0;
}
.scroll table{
    width: 333px;
}
.scroll .thumb{
    width: 8px;
    height: 142px;
    margin-top: 14px;
}
.scroll tr{
    height: 21px;
}
.scroll .n{
    width: 21px;
}
.scroll .p{
    width: 182px;
}
.scroll .v{
    width: 89px;
}
.scroll .x{
    width: 41px;
}
.scroll tbody th{
    background: #f1f1f1;
}
.scroll td{
    padding-left: 3px;
}
.scroll td:nth-child(2){
    color: #1a5cff;
}
.scroll td:last-child{
    padding: 0;
    text-align: center;
}
.scroll td input{
    display: block;
    margin: auto;
}
.rebar{
    width: 10px;
    height: 10px;
    margin: 0 1px;
    vertical-align: 1px;
}

input[type=checkbox], input[type=radio]{
    appearance: none;
    display: grid;
    place-items: center;
    flex: none;
    width: 14px;
    height: 14px;
    border: 1px solid #7d7d7d;
    border-radius: 2px;
    background: #fff;
}
input[type=radio]{
    border-radius: 50%;
}
input[type=radio]:checked::before{
    content: "";
    width: 6px;
    height: 6px;
    border-radius: 50%;
    background: #2b7fe3;
}
input[type=checkbox]:checked{
    border-color: #2b7fe3;
    background: #2b7fe3;
}
input[type=checkbox]:checked::before{
    content: "";
    width: 9px;
    height: 5px;
    margin-bottom: 3px;
    border: solid #fff;
    border-width: 0 0 2px 2px;
    transform: rotate(-45deg);
}

.splitter{
    display: flex;
    align-items: flex-start;
    flex: none;
    width: 4px;
}
.splitter button{
    width: 4px;
    height: 100px;
    margin-top: 368px;
    background: linear-gradient(#b8c0c8, #b8c0c8) right / 3px 6px no-repeat #5c6975;
}

/* vista 3D */
.view{
    position: relative;
    flex: 1;
    min-width: 0;
    background: #000;
    overflow: hidden;
}
.scene{
    display: block;
    width: 100%;
    height: 100%;
    shape-rendering: crispEdges;
}
.axes{
    fill: none;
    stroke: #f00;
}
.thick{
    stroke-width: 3;
}
.green{
    stroke: #008000;
}

/* diálogo */
.dialog{
    position: absolute;
    left: 191px;
    top: 56px;
    width: 413px;
    padding: 0 9px 9px;
    background: #fff;
    outline: 1px solid #2a2a2a;
    box-shadow: 0 6px 24px rgba(0, 0, 0, .5);
}
.dialog header{
    display: flex;
    align-items: center;
    justify-content: space-between;
    height: 39px;
    padding: 0 3px 0 2px;
}
.dialog h2{
    font-size: 14px;
}
.dialog header button{
    display: flex;
}
.dialog header svg{
    width: 12px;
    height: 12px;
}
.pair{
    display: flex;
    align-items: center;
    gap: 3px;
    height: 14px;
    padding-left: 1px;
    white-space: nowrap;
}
.strong{
    gap: 4px;
    color: #000;
}
fieldset{
    min-width: 0;
    margin: 0;
    padding: 0 9px 6px;
    border: 1px solid #c8c8c8;
    border-radius: 3px;
}
legend{
    padding: 0;
    line-height: 14px;
}
.place{
    margin: 15px 0 13px;
}
.row{
    display: flex;
    align-items: center;
    height: 23px;
}
.two{
    display: grid;
    grid-template-columns: 207px 1fr;
}
.field{
    display: flex;
    align-items: center;
    height: 32px;
}
.field label{
    flex: none;
    width: 75px;
    white-space: nowrap;
}
.field.bars label{
    width: 33px;
}
.place .field label{
    width: 207px;
}
.place .right{
    padding-left: 22px;
}
.field .select, .field input[type=text]{
    flex: 1;
    min-width: 0;
}
.field input.num{
    flex: 0 0 70px;
}
.field select, .field input[type=text]{
    display: block;
    height: 26px;
    padding: 0 2px;
    border: 1px solid #c8c8c8;
    border-radius: 3px;
    background: #fff;
}
.field select{
    padding: 0 5px;
}
.field input[type=text]:disabled{
    border-color: #c3c8d4;
    background: #e5e5e5;
    color: #999;
}
.field select:disabled{
    opacity: 1;
    background: linear-gradient(#e5e5e5, #e5e5e5) 3px 1px / 81px 22px no-repeat #fff;
    color: #999;
}
.halves{
    display: grid;
    grid-template-columns: 194px 1fr;
    gap: 6px;
}
.halves p{
    padding-right: 8px;
    line-height: 23px;
    text-align: right;
}
.dialog h3{
    display: flex;
    align-items: center;
    gap: 6px;
    height: 20px;
    margin-top: 10px;
}
.dialog h3::after{
    content: "";
    flex: 1;
    height: 1px;
    background: #c8c8c8;
}
.mode{
    padding: 1px 0 8px 20px;
    border-bottom: 1px solid #c8c8c8;
}
.mode .row{
    height: 24px;
}
.mode .two{
    grid-template-columns: 133px 1fr;
}
.dialog footer{
    display: flex;
    justify-content: flex-end;
    gap: 6px;
    margin-top: 10px;
}
footer button{
    width: 80px;
    height: 26px;
    border: 1px solid #c8c8c8;
    border-radius: 3px;
}
footer .ok{
    border-color: #2b7fe3;
    background: #2b7fe3;
    color: #fff;
}
```
